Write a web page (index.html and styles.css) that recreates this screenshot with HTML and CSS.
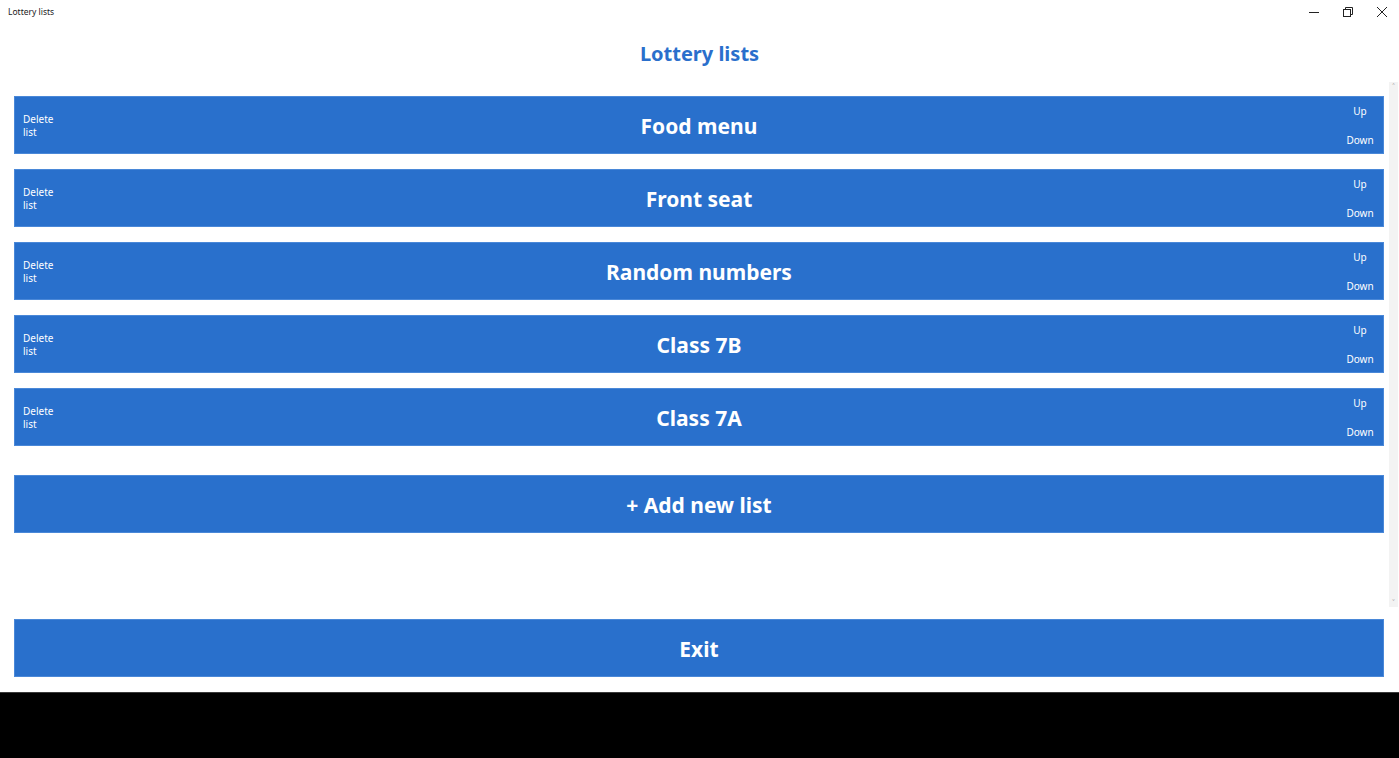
FILE: index.html
```html
<!DOCTYPE html>
<html lang="en">
<head>
  <meta charset="UTF-8">
  <meta name="viewport" content="width=device-width, initial-scale=1.0">
  <title>Lottery lists</title>
  <link rel="stylesheet" href="styles.css">
</head>
<body>

  <div class="window">
    <!-- Barra de título da janela -->
    <div class="titlebar">
      <span class="titlebar-text">Lottery lists</span>
      <div class="window-controls">
        <span class="control">
          <svg width="10" height="10" viewBox="0 0 10 10"><path d="M0 5.5h10" stroke="#222" stroke-width="1"/></svg>
        </span>
        <span class="control">
          <svg width="10" height="10" viewBox="0 0 10 10" fill="none" stroke="#222" stroke-width="1"><rect x="0.5" y="2.5" width="7" height="7"/><path d="M2.5 2.5V0.5h7v7h-2"/></svg>
        </span>
        <span class="control">
          <svg width="10" height="10" viewBox="0 0 10 10"><path d="M0 0L10 10M10 0L0 10" stroke="#222" stroke-width="1"/></svg>
        </span>
      </div>
    </div>

    <div class="title">
      <h1>Lottery lists</h1>
    </div>

    <div class="scroll-area">
      <div class="lists" id="lists">
        <!-- Linhas preenchidas pelo script -->
      </div>
      <button class="big-button add-button">+ Add new list</button>

      <div class="scrollbar">
        <span class="arrow">&#x2C4;</span>
        <span class="arrow">&#x2C5;</span>
      </div>
    </div>

    <div class="footer">
      <button class="big-button">Exit</button>
    </div>

    <div class="taskbar"></div>
  </div>

  <script>
    const listas = ['Food menu', 'Front seat', 'Random numbers', 'Class 7B', 'Class 7A'];

    function renderListas() {
      const container = document.getElementById('lists');
      container.innerHTML = '';

      listas.forEach(nome => {
        const row = document.createElement('div');
        row.className = 'list-row';

        const del = document.createElement('button');
        del.className = 'small-button delete-button';
        del.innerHTML = 'Delete<br>list';
        row.appendChild(del);

        const name = document.createElement('span');
        name.className = 'list-name';
        name.textContent = nome;
        row.appendChild(name);

        const moves = document.createElement('div');
        moves.className = 'move-buttons';
        moves.innerHTML = '<button class="small-button">Up</button><button class="small-button">Down</button>';
        row.appendChild(moves);

        container.appendChild(row);
      });
    }

    document.addEventListener('DOMContentLoaded', renderListas);
  </script>
</body>
</html>
```

FILE: styles.css
```css
/* Estilo geral */
body {
  margin: 0;
  font-family: "Noto Sans", "Open Sans", sans-serif;
  background-color: #ffffff;
}

.window {
  display: flex;
  flex-direction: column;
  height: 758px;
  overflow: hidden;
}

/* Barra de título */
.titlebar {
  height: 23px;
  display: flex;
  align-items: center;
  justify-content: space-between;
  padding-left: 8px;
  flex-shrink: 0;
}

.titlebar-text {
  font-size: 8.5px;
  color: #1a1a1a;
}

.window-controls {
  display: flex;
  height: 100%;
  padding-top: 1px;
  box-sizing: border-box;
}

.control {
  width: 34px;
  display: flex;
  align-items: center;
  justify-content: center;
}

/* Título da página */
.title {
  height: 57px;
  display: flex;
  align-items: center;
  justify-content: center;
  flex-shrink: 0;
}

.title h1 {
  margin: 0;
  padding-top: 3px;
  font-size: 20px;
  font-weight: 700;
  color: #2a6fcc;
}

/* Área com rolagem */
.scroll-area {
  position: relative;
  height: 527px;
  padding: 16px 15px 0 14px;
  box-sizing: border-box;
  flex-shrink: 0;
}

.lists {
  display: flex;
  flex-direction: column;
  gap: 15px;
}

.list-row {
  height: 58px;
  box-sizing: border-box;
  background-color: #2970cc;
  border: 1px solid #4a88d8;
  display: flex;
  align-items: center;
  justify-content: space-between;
  color: #ffffff;
}

.list-name {
  font-size: 21px;
  font-weight: 700;
  padding-top: 2px;
}

.small-button {
  background: none;
  border: none;
  color: #ffffff;
  font-family: inherit;
  font-size: 10px;
  line-height: 13px;
  padding: 0;
  cursor: pointer;
}

.delete-button {
  width: 80px;
  text-align: left;
  padding-left: 8px;
  padding-top: 2px;
}

.move-buttons {
  width: 80px;
  height: 100%;
  display: flex;
  flex-direction: column;
  align-items: flex-end;
  justify-content: space-between;
  padding: 8px 9px 6px 0;
  box-sizing: border-box;
}

.move-buttons .small-button {
  width: 28px;
  text-align: center;
}

/* Botões grandes */
.big-button {
  display: block;
  width: 100%;
  height: 58px;
  background-color: #2970cc;
  border: 1px solid #4a88d8;
  color: #ffffff;
  font-family: inherit;
  font-size: 21px;
  font-weight: 700;
  padding-top: 2px;
  cursor: pointer;
}

.add-button {
  margin-top: 29px;
}

/* Barra de rolagem */
.scrollbar {
  position: absolute;
  top: 2px;
  right: 1px;
  bottom: 0;
  width: 9px;
  background-color: #f3f3f3;
  display: flex;
  flex-direction: column;
  justify-content: space-between;
  align-items: center;
}

.arrow {
  font-size: 9px;
  line-height: 9px;
  color: #9a9a9a;
}

/* Rodapé com o botão de sair */
.footer {
  padding: 12px 15px 15px 14px;
  flex-shrink: 0;
}

.taskbar {
  flex: 1;
  background-color: #000000;
  border-top: 1px solid #3a3a3a;
}
```
